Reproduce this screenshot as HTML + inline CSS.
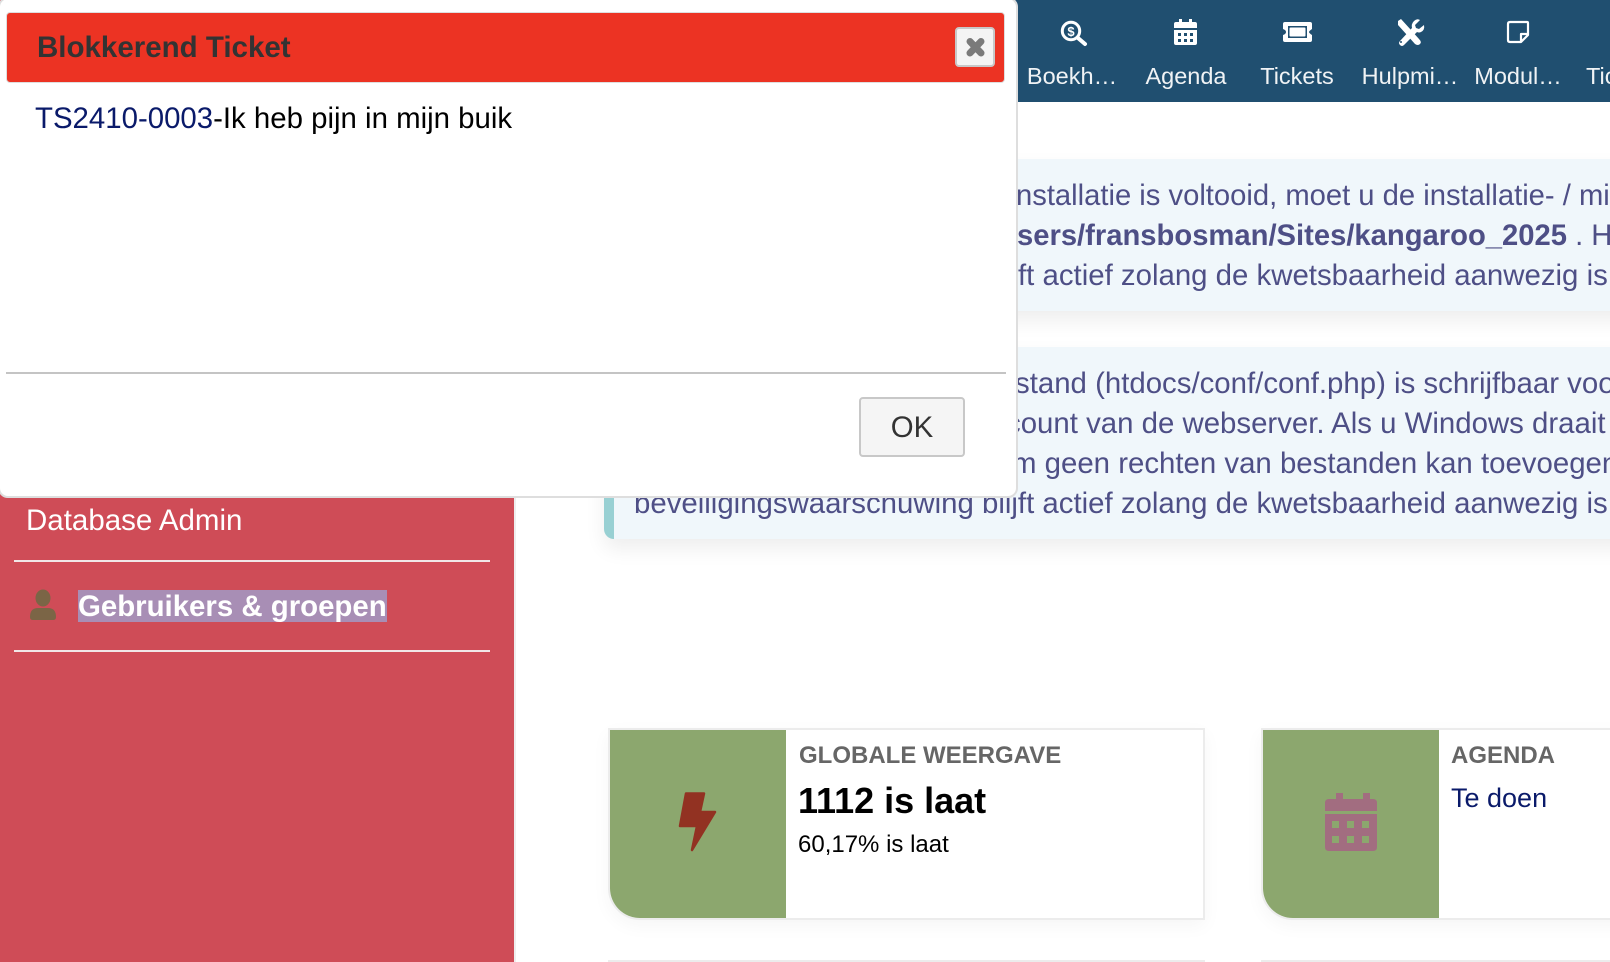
<!DOCTYPE html>
<html><head><meta charset="utf-8">
<style>
html,body{margin:0;padding:0;width:1610px;height:962px;overflow:hidden;background:#fff;font-family:"Liberation Sans",sans-serif}
.a{position:absolute;white-space:nowrap}
svg{position:absolute;overflow:visible}
#nav{position:absolute;left:0;top:0;width:1610px;height:102px;background:#204f70}
.n{position:absolute;top:62px;font-size:23.5px;line-height:28px;color:#f0f3f5;transform:translateX(-50%);white-space:nowrap}
#side{position:absolute;left:0;top:0;width:514px;height:962px;background:#cf4c57;border-right:2px solid #eee}
.sep{position:absolute;left:14px;width:476px;height:2px;background:#f1e6e7}
.box{position:absolute;left:604px;width:1100px;background:#f0f7fb;border-left:10px solid #98d0d3;border-radius:0 0 0 10px;box-shadow:0 10px 20px rgba(0,0,0,.07)}
.t{position:absolute;white-space:nowrap;font-size:29.4px;line-height:40px;color:#4e4f86}
.card{position:absolute;top:728px;width:593px;height:188px;border:2px solid #ececec;border-radius:0 0 0 32px;background:#fff;box-shadow:0 6px 18px rgba(0,0,0,.04)}
.g{position:absolute;left:0;top:0;width:176px;height:188px;background:#8ca76e;border-radius:0 0 0 30px}
#dlg{position:absolute;left:-2px;top:-3px;width:1016px;height:497px;background:#fff;border:2px solid #dedede;border-radius:10px;overflow:hidden}
</style></head><body>
<div id="nav">
<svg style="left:0;top:0" width="1610" height="102" fill="#fff">
<circle cx="1071" cy="31" r="8.7" fill="none" stroke="#fff" stroke-width="3"/>
<path d="M1078 38L1085 44" stroke="#fff" stroke-width="4" stroke-linecap="round"/>
<text x="1071" y="36" font-size="13" font-weight="bold" text-anchor="middle" font-family="Liberation Sans">$</text>
<path fill-rule="evenodd" d="M1179 19h3v3h7v-3h3v3h3q2 0 2 2v4h-23v-4q0-2 2-2h3zM1174 30h23v13q0 2-2 2h-19q-2 0-2-2zM1178 33v3h3v-3zM1184 33v3h3v-3zM1190 33v3h3v-3zM1178 39v3h3v-3zM1184 39v3h3v-3zM1190 39v3h3v-3z"/>
<path fill-rule="evenodd" d="M1285 22h25q2 0 2 2v5q-3 2-3 3t3 3v5q0 2-2 2h-25q-2 0-2-2v-5q3-1 3-3t-3-3v-5q0-2 2-2zM1288 26v12h19v-12z"/>
<rect x="1289.5" y="27.5" width="16" height="9" rx="1"/>
<path d="M1398 21l3-2 10 11 8 9q3 3 1 5t-5 0l-8-9-9-10z"/>
<path d="M1420 20l-5 5 1 3 3 1 5-4q1 5-3 7-2 1-4 0l-13 13q-2 2-4 0t0-4l12-13q-1-4 2-7t6-1z"/>
<circle cx="1401" cy="42" r="1" fill="#204f70"/>
<path fill="none" stroke="#fff" stroke-width="2.2" stroke-linejoin="round" d="M1510 22h17q1 0 1 1v12l-7 7h-11q-2 0-2-2v-16q0-2 2-2zM1528 34h-7v8"/>
</svg>
<div class="n" style="left:1072px">Boekh…</div>
<div class="n" style="left:1186px">Agenda</div>
<div class="n" style="left:1297px">Tickets</div>
<div class="n" style="left:1410px">Hulpmi…</div>
<div class="n" style="left:1518px">Modul…</div>
<div class="n" style="left:1586px;transform:none">Tic</div>
</div>

<div id="side">
<div class="a" style="left:26px;top:504px;font-size:29.5px;line-height:34px;color:#fff">Database Admin</div>
<div class="sep" style="top:560px"></div>
<svg style="left:0;top:0" width="514" height="700" fill="#7b6546">
<ellipse cx="43" cy="598" rx="7.5" ry="8.5"/>
<path d="M30 617q0-9 8-9h10q8 0 8 9 0 3-3 3h-20q-3 0-3-3z"/>
</svg>
<div class="a" style="left:78px;top:590px;height:32px;background:#a88eb5;font-size:29.4px;line-height:34px;font-weight:bold;color:#fff">Gebruikers &amp; groepen</div>
<div class="sep" style="top:650px"></div>
</div>

<div class="box" style="top:159px;height:152px"></div>
<div class="t" style="left:1016px;top:176px;font-size:29.2px">nstallatie is voltooid, moet u de installatie- / migratie</div>
<div class="t" style="left:1017px;top:216px;font-size:29.2px"><b>sers/fransbosman/Sites/kangaroo_2025</b> . Het</div>
<div class="t" style="left:1018px;top:256px">ft actief zolang de kwetsbaarheid aanwezig is</div>

<div class="box" style="top:347px;height:192px"></div>
<div class="t" style="left:1015px;top:364px">stand (htdocs/conf/conf.php) is schrijfbaar voor</div>
<div class="t" style="left:1006px;top:404px">count van de webserver. Als u Windows draait</div>
<div class="t" style="left:1012px;top:444px">m geen rechten van bestanden kan toevoegen</div>
<div class="t" style="left:634px;top:484px">beveiligingswaarschuwing blijft actief zolang de kwetsbaarheid aanwezig is</div>

<div class="card" style="left:608px"><div class="g"></div></div>
<svg style="left:0;top:0" width="1610" height="962">
<path fill="#923222" stroke="#923222" stroke-width="2.5" stroke-linejoin="round" d="M686 793.5H704L700 812H715L692 850L697 826H680Z"/>
</svg>
<div class="a" style="left:799px;top:741px;font-size:24px;line-height:30px;font-weight:bold;color:#666">GLOBALE WEERGAVE</div>
<div class="a" style="left:798px;top:780px;font-size:36px;line-height:42px;font-weight:bold;color:#000">1112 is laat</div>
<div class="a" style="left:798px;top:830px;font-size:24px;line-height:30px;color:#000">60,17% is laat</div>

<div class="card" style="left:1261px"><div class="g"></div></div>
<svg style="left:0;top:0" width="1610" height="962">
<path fill="#a26d80" fill-rule="evenodd" d="M1336 793h7v6h20v-6h7v6h3q4 0 4 4v8h-52v-8q0-4 4-4h7zM1325 814h52v33q0 4-4 4h-44q-4 0-4-4zM1332 821v7h7v-7zM1347 821v7h7v-7zM1362 821v7h7v-7zM1332 836v7h7v-7zM1347 836v7h7v-7zM1362 836v7h7v-7z"/>
</svg>
<div class="a" style="left:1451px;top:741px;font-size:24px;line-height:30px;font-weight:bold;color:#666">AGENDA</div>
<div class="a" style="left:1451px;top:781px;font-size:27px;line-height:34px;color:#0a1a6a">Te doen</div>
<div class="a" style="left:608px;top:960px;width:597px;height:2px;background:#ececec"></div>
<div class="a" style="left:1261px;top:960px;width:349px;height:2px;background:#ececec"></div>

<div id="dlg">
<div class="a" style="left:6px;top:13px;width:997px;height:69px;background:#ec3323;border:1px solid #dedede;border-radius:4px"></div>
<div class="a" style="left:37px;top:31px;font-size:29.5px;line-height:36px;font-weight:bold;color:#333">Blokkerend Ticket</div>
<div class="a" style="left:955px;top:28px;width:36px;height:36px;background:#f4f4f4;border:2px solid #c8c8c8;border-radius:4px"></div>
<svg style="left:0;top:0" width="1017" height="100"><path d="M970 42.5L981 54M981 42.5L970 54" stroke="#7a7a7a" stroke-width="7" stroke-linecap="round"/></svg>
<div class="a" style="left:35px;top:102px;font-size:29.4px;line-height:36px;color:#000"><span style="color:#0a1a6a">TS2410-0003</span>-Ik heb pijn in mijn buik</div>
<div class="a" style="left:6px;top:373px;width:1000px;height:2px;background:#c4c4c4"></div>
<div class="a" style="left:859px;top:398px;width:102px;height:56px;background:#f5f5f5;border:2px solid #c8c8c8;border-radius:4px;font-size:29.4px;line-height:58px;text-align:center;color:#333">OK</div>
</div>
</body></html>
